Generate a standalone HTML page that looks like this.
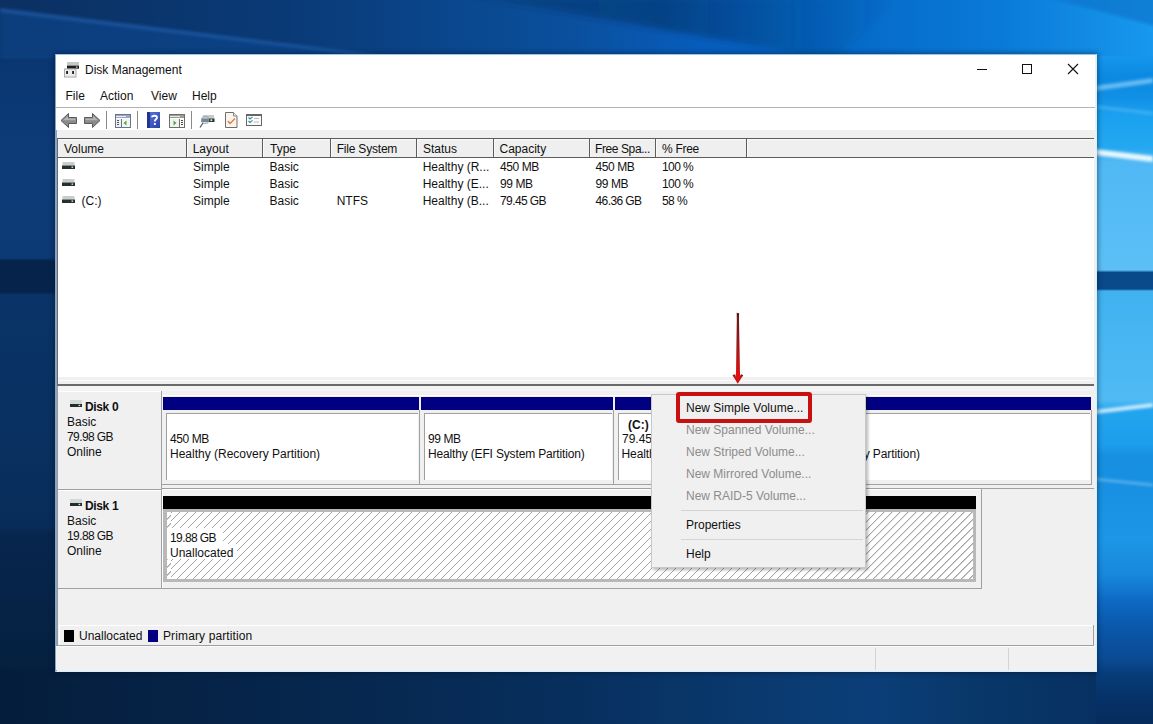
<!DOCTYPE html>
<html><head><meta charset="utf-8">
<style>
*{margin:0;padding:0;box-sizing:border-box}
html,body{width:1153px;height:724px;overflow:hidden;position:relative;background:#0a3a72}
body{font-family:"Liberation Sans",sans-serif;font-size:12px;color:#111}
.a{position:absolute}
.t{position:absolute;white-space:nowrap;line-height:15px;height:15px}
.bg{position:absolute}
</style></head><body>

<!-- desktop background -->
<svg class="a" style="left:0;top:0" width="1153" height="724" viewBox="0 0 1153 724">
<defs>
 <linearGradient id="gTop" x1="0" y1="0" x2="1153" y2="0" gradientUnits="userSpaceOnUse">
  <stop offset="0" stop-color="#0b3062"/><stop offset="0.25" stop-color="#0a3a76"/><stop offset="0.5" stop-color="#0a509e"/><stop offset="0.6" stop-color="#075cba"/>
  <stop offset="0.7" stop-color="#0466c4"/><stop offset="0.87" stop-color="#0a7ad8"/><stop offset="1" stop-color="#1898ee"/>
 </linearGradient>
 <linearGradient id="gLeft" x1="0" y1="56" x2="0" y2="671" gradientUnits="userSpaceOnUse"><stop offset="0.0000" stop-color="#0a3670"/><stop offset="0.1528" stop-color="#0c3b78"/><stop offset="0.3285" stop-color="#0b3a74"/><stop offset="0.3333" stop-color="#06234a"/><stop offset="0.3837" stop-color="#06244c"/><stop offset="0.3886" stop-color="#0a3468"/><stop offset="0.6407" stop-color="#09305f"/><stop offset="0.7642" stop-color="#082c5a"/><stop offset="0.7772" stop-color="#07264e"/><stop offset="1.0000" stop-color="#05203f"/></linearGradient>
 <linearGradient id="gRight" x1="0" y1="56" x2="0" y2="724" gradientUnits="userSpaceOnUse"><stop offset="0.0000" stop-color="#1696ec"/><stop offset="0.0284" stop-color="#0c8ae2"/><stop offset="0.0404" stop-color="#0c8ae2"/><stop offset="0.0659" stop-color="#1292e6"/><stop offset="0.0853" stop-color="#18a0f0"/><stop offset="0.1377" stop-color="#24a8f0"/><stop offset="0.1497" stop-color="#40b0f0"/><stop offset="0.1587" stop-color="#50b8f4"/><stop offset="0.3204" stop-color="#5cc0f6"/><stop offset="0.3241" stop-color="#0a4888"/><stop offset="0.3488" stop-color="#0a4a8c"/><stop offset="0.3518" stop-color="#40b2f0"/><stop offset="0.5150" stop-color="#50baf4"/><stop offset="0.5299" stop-color="#22a4ee"/><stop offset="0.5823" stop-color="#1c9eec"/><stop offset="0.5973" stop-color="#1890e2"/><stop offset="0.6347" stop-color="#1890e2"/><stop offset="0.7246" stop-color="#1c96e6"/><stop offset="0.7769" stop-color="#1888dc"/><stop offset="0.8144" stop-color="#0e6ac4"/><stop offset="0.8593" stop-color="#0a56a8"/><stop offset="0.9042" stop-color="#0a4a92"/><stop offset="0.9266" stop-color="#073c78"/><stop offset="0.9566" stop-color="#06326a"/><stop offset="1.0000" stop-color="#052c5c"/></linearGradient>
 <linearGradient id="gBot" x1="0" y1="0" x2="1153" y2="0" gradientUnits="userSpaceOnUse"><stop offset="0" stop-color="#051d3c"/><stop offset="0.26" stop-color="#06264c"/><stop offset="0.48" stop-color="#072e5c"/><stop offset="0.67" stop-color="#0a3a70"/><stop offset="0.76" stop-color="#0b3e78"/><stop offset="0.86" stop-color="#083668"/><stop offset="1" stop-color="#062e5e"/></linearGradient>
 <linearGradient id="gBotR" x1="0" y1="660" x2="0" y2="724" gradientUnits="userSpaceOnUse">
  <stop offset="0" stop-color="#0a4c98"/><stop offset="1" stop-color="#083a72"/>
 </linearGradient>
 <linearGradient id="gWedge" x1="470" y1="0" x2="900" y2="0" gradientUnits="userSpaceOnUse"><stop offset="0" stop-color="#022a58" stop-opacity="0.25"/><stop offset="0.45" stop-color="#022a58" stop-opacity="0.5"/><stop offset="1" stop-color="#023060" stop-opacity="0"/></linearGradient>
 <filter id="bl" x="-10%" y="-50%" width="120%" height="200%"><feGaussianBlur stdDeviation="1.5"/></filter>
 <filter id="bl3" x="-10%" y="-50%" width="120%" height="200%"><feGaussianBlur stdDeviation="3"/></filter>
</defs>
<rect x="0" y="0" width="1153" height="724" fill="#0a3a72"/>
<rect x="0" y="0" width="1153" height="58" fill="url(#gTop)"/>
<rect x="0" y="56" width="58" height="615" fill="url(#gLeft)"/>
<rect x="1094" y="56" width="59" height="668" fill="url(#gRight)"/>
<rect x="0" y="668" width="1096" height="56" fill="url(#gBot)"/>

<!-- top band shapes -->
<polygon points="0,10 390,58 0,58" fill="#0e4a92" opacity="0.55" filter="url(#bl)"/>
<polygon points="0,8 390,56 390,59 0,12" fill="#2a6cc0" opacity="0.5" filter="url(#bl)"/>
<polygon points="470,-4 900,-4 836,60" fill="url(#gWedge)" filter="url(#bl3)"/>
<polygon points="1050,-2 1160,-2 1160,27" fill="#0a74cc" opacity="0.7" filter="url(#bl)"/>
<!-- right strip streaks -->
<polygon points="1094,86 1153,78 1153,83 1094,91" fill="#80c8f6" opacity="0.8" filter="url(#bl)"/>
<polygon points="1094,105 1153,112 1153,115 1094,108" fill="#60b8f2" opacity="0.6" filter="url(#bl)"/>
<polygon points="1094,149 1153,156 1153,162 1094,155" fill="#e8f8ff" opacity="1" filter="url(#bl)"/>
<polygon points="1094,410 1153,403 1153,407 1094,414" fill="#e0f4ff" opacity="0.9" filter="url(#bl)"/>
<polygon points="1094,478 1153,484 1153,486 1094,480" fill="#90d0f4" opacity="0.7" filter="url(#bl)"/>
</svg>

<!-- window -->
<div class="a" id="win" style="left:55px;top:54px;width:1042px;height:618px;background:#f0f0f0;border:1px solid #d8f0fa;border-top-color:#9cc4e4;border-left:2px solid #8aa4c4;box-shadow:0 0 5px 1px rgba(0,16,40,0.45)"></div>
<!-- title bar + menu + toolbar white -->
<div class="a" style="left:56px;top:55px;width:1039px;height:52px;background:#fff"></div>
<div class="a" style="left:56px;top:107px;width:1039px;height:1px;background:#b4b4b4"></div>
<div class="a" style="left:56px;top:108px;width:1039px;height:22px;background:#fff"></div>

<!-- title icon -->
<svg class="a" style="left:64px;top:62px" width="16" height="16" viewBox="0 0 16 16">
  <rect x="3" y="0" width="12" height="3" fill="#c8c8c8"/>
  <rect x="3" y="3.5" width="12" height="3.2" fill="#1e1e1e"/>
  <rect x="12" y="4.5" width="1.5" height="1.2" fill="#d8d8d8"/>
  <rect x="0.5" y="7" width="11.5" height="8" fill="#ececec" stroke="#a8a8a8" stroke-width="1"/>
  <rect x="2.2" y="9" width="1.7" height="3" fill="#111"/>
  <rect x="8.2" y="9" width="1.7" height="3" fill="#111"/>
</svg>
<div class="t" style="left:85px;top:63px">Disk Management</div>

<!-- window controls -->
<div class="a" style="left:977px;top:69px;width:10px;height:1px;background:#111"></div>
<div class="a" style="left:1022px;top:64px;width:10px;height:10px;border:1px solid #111"></div>
<svg class="a" style="left:1067px;top:63px" width="12" height="12" viewBox="0 0 12 12"><path d="M1 1L11 11M11 1L1 11" stroke="#111" stroke-width="1.1"/></svg>

<!-- menu -->
<div class="t" style="left:65.5px;top:89px">File</div>
<div class="t" style="left:100px;top:89px">Action</div>
<div class="t" style="left:151px;top:89px">View</div>
<div class="t" style="left:192px;top:89px">Help</div>

<!-- toolbar -->
<div id="toolbar">
<svg class="a" style="left:60px;top:112px" width="18" height="17" viewBox="0 0 18 17">
 <path d="M1 8.5L8.5 1.5V5.5H16.5V11.5H8.5V15.5Z" fill="#8a8a8a" stroke="#5a5a5a" stroke-width="1" stroke-linejoin="round"/>
 <path d="M3 8.3L8 3.8V6.5H15.5V8.3Z" fill="#b4b4b4"/>
</svg>
<svg class="a" style="left:83px;top:112px" width="18" height="17" viewBox="0 0 18 17">
 <path d="M17 8.5L9.5 1.5V5.5H1.5V11.5H9.5V15.5Z" fill="#8a8a8a" stroke="#5a5a5a" stroke-width="1" stroke-linejoin="round"/>
 <path d="M15 8.3L10 3.8V6.5H2.5V8.3Z" fill="#b4b4b4"/>
</svg>
<div class="a" style="left:106px;top:111px;width:1px;height:18px;background:#8a8a8a"></div>
<svg class="a" style="left:115px;top:114px" width="16" height="14" viewBox="0 0 16 14">
 <rect x="0.5" y="0.5" width="15" height="13" fill="#fff" stroke="#6a7290"/>
 <rect x="1" y="1" width="14" height="3" fill="#9aa6c4"/>
 <rect x="1" y="2" width="10" height="1" fill="#e8ecf4"/>
 <rect x="1" y="5" width="5" height="8" fill="#eef0f6"/>
 <rect x="2" y="6" width="2" height="1" fill="#555"/><rect x="2" y="8" width="2" height="1" fill="#555"/><rect x="2" y="10" width="2" height="1" fill="#555"/>
 <rect x="6" y="5" width="1" height="8" fill="#6a7290"/>
 <rect x="7" y="5" width="8" height="8" fill="#f0f8ec"/>
 <path d="M8.5 9L11.5 6.5V11.5Z" fill="#5aa05a"/>
</svg>
<div class="a" style="left:137px;top:111px;width:1px;height:18px;background:#8a8a8a"></div>
<svg class="a" style="left:147px;top:112px" width="13" height="16" viewBox="0 0 13 16">
 <defs><linearGradient id="hb" x1="0" y1="0" x2="1" y2="1"><stop offset="0" stop-color="#5a78e0"/><stop offset="1" stop-color="#2a40a8"/></linearGradient></defs>
 <rect x="0" y="0" width="13" height="16" fill="url(#hb)"/>
 <rect x="0" y="0" width="3" height="16" fill="#203490"/>
 <path d="M5 5.2C5 3.2 10 3.2 10 5.6C10 7.2 7.8 7.4 7.8 9.4" fill="none" stroke="#fff" stroke-width="1.8"/>
 <rect x="6.9" y="11" width="1.9" height="1.9" fill="#fff"/>
</svg>
<svg class="a" style="left:169px;top:114px" width="16" height="14" viewBox="0 0 16 14">
 <rect x="0.5" y="0.5" width="15" height="13" fill="#fff" stroke="#6e6e6e"/>
 <rect x="1" y="1" width="14" height="3" fill="#9a9a9a"/>
 <rect x="1" y="2" width="10" height="1" fill="#eaeaea"/>
 <rect x="1" y="5" width="9" height="8" fill="#eef6ea"/>
 <path d="M4.5 6.5L7.5 9L4.5 11.5Z" fill="#5aa05a"/>
 <rect x="10" y="5" width="1" height="8" fill="#6e6e6e"/>
 <rect x="12" y="6" width="2" height="1" fill="#444"/><rect x="12" y="8" width="2" height="1" fill="#444"/><rect x="12" y="10" width="2" height="1" fill="#444"/>
</svg>
<div class="a" style="left:191px;top:111px;width:1px;height:18px;background:#8a8a8a"></div>
<svg class="a" style="left:199px;top:114px" width="16" height="15" viewBox="0 0 16 15">
 <rect x="4" y="1" width="11" height="3.5" fill="#c4ccc8"/>
 <rect x="2.5" y="4.5" width="13" height="3.5" fill="#2a3230"/>
 <rect x="11.5" y="5.3" width="1.8" height="1.8" fill="#e8f0e8"/>
 <circle cx="6.2" cy="6" r="3.8" fill="#b8c8d8" fill-opacity="0.55" stroke="#8aa0b4" stroke-width="0.7"/>
 <path d="M4 9L1 13.5" stroke="#555" stroke-width="1.2"/>
</svg>
<svg class="a" style="left:225px;top:112px" width="13" height="17" viewBox="0 0 13 17">
 <path d="M0.5 0.5H8.5L12 4V15.5H0.5Z" fill="#fdf4ee" stroke="#6e6e6e"/>
 <path d="M8.5 0.5V4H12" fill="#e8e8e8" stroke="#8a8a8a"/>
 <path d="M2.8 9L5 11.5L10 6.5" fill="none" stroke="#dc7a40" stroke-width="1.3"/>
</svg>
<svg class="a" style="left:246px;top:114px" width="16" height="12" viewBox="0 0 16 12">
 <rect x="0.5" y="0.5" width="15" height="11" fill="#fafcfc" stroke="#666"/>
 <rect x="0.5" y="0.5" width="15" height="1.5" fill="#666"/>
 <path d="M2.5 3.5L4 5L6.5 2.8M2.5 7L4 8.5L6.5 6.3" fill="none" stroke="#3a8a9a" stroke-width="1.1"/>
 <rect x="8" y="4" width="5" height="1" fill="#bbb"/><rect x="8" y="7.5" width="5" height="1" fill="#bbb"/>
</svg>
</div>

<!-- list view -->
<div class="a" style="left:57px;top:138px;width:1037px;height:248px;background:#fff;border-top:1px solid #5c5c5c;border-left:1px solid #6a6a6a"></div>
<div class="a" style="left:58px;top:139px;width:1036px;height:19px;background:#efefef;border-top:1px solid #fafafa;border-bottom:1px solid #5c5c5c"></div>
<div id="hdr">
<div class="t" style="left:64px;top:142px">Volume</div>
<div class="t" style="left:192.7px;top:142px">Layout</div>
<div class="t" style="left:270px;top:142px">Type</div>
<div class="t" style="left:336.7px;top:142px;letter-spacing:-0.2px">File System</div>
<div class="t" style="left:423px;top:142px">Status</div>
<div class="t" style="left:499.5px;top:142px">Capacity</div>
<div class="t" style="left:595px;top:142px;letter-spacing:-0.4px">Free Spa...</div>
<div class="t" style="left:662px;top:142px;letter-spacing:-0.3px">% Free</div>
<div class="a" style="left:186px;top:139px;width:1px;height:18px;background:#5c5c5c"></div><div class="a" style="left:187px;top:140px;width:1px;height:17px;background:#fafafa"></div>
<div class="a" style="left:262px;top:139px;width:1px;height:18px;background:#5c5c5c"></div><div class="a" style="left:263px;top:140px;width:1px;height:17px;background:#fafafa"></div>
<div class="a" style="left:330px;top:139px;width:1px;height:18px;background:#5c5c5c"></div><div class="a" style="left:331px;top:140px;width:1px;height:17px;background:#fafafa"></div>
<div class="a" style="left:416px;top:139px;width:1px;height:18px;background:#5c5c5c"></div><div class="a" style="left:417px;top:140px;width:1px;height:17px;background:#fafafa"></div>
<div class="a" style="left:493px;top:139px;width:1px;height:18px;background:#5c5c5c"></div><div class="a" style="left:494px;top:140px;width:1px;height:17px;background:#fafafa"></div>
<div class="a" style="left:589px;top:139px;width:1px;height:18px;background:#5c5c5c"></div><div class="a" style="left:590px;top:140px;width:1px;height:17px;background:#fafafa"></div>
<div class="a" style="left:655px;top:139px;width:1px;height:18px;background:#5c5c5c"></div><div class="a" style="left:656px;top:140px;width:1px;height:17px;background:#fafafa"></div>
<div class="a" style="left:746px;top:139px;width:1px;height:18px;background:#5c5c5c"></div><div class="a" style="left:747px;top:140px;width:1px;height:17px;background:#fafafa"></div>
</div>
<div id="rows">
<svg class="a" style="left:62px;top:162px" width="13" height="8" viewBox="0 0 13 8"><rect x="0.5" y="0" width="12" height="3.5" fill="#c8cecb"/><rect x="0" y="3.5" width="13" height="3.5" fill="#27302c"/><rect x="9.5" y="4.5" width="1.6" height="1.3" fill="#e6eee8"/></svg>
<div class="t" style="left:193px;top:160px">Simple</div>
<div class="t" style="left:269.5px;top:160px">Basic</div>
<div class="t" style="left:422.7px;top:160px">Healthy (R...</div>
<div class="t" style="left:500px;top:160px;letter-spacing:-0.4px">450 MB</div>
<div class="t" style="left:595.5px;top:160px;letter-spacing:-0.4px">450 MB</div>
<div class="t" style="left:662px;top:160px;letter-spacing:-0.6px">100 %</div>
<svg class="a" style="left:62px;top:179px" width="13" height="8" viewBox="0 0 13 8"><rect x="0.5" y="0" width="12" height="3.5" fill="#c8cecb"/><rect x="0" y="3.5" width="13" height="3.5" fill="#27302c"/><rect x="9.5" y="4.5" width="1.6" height="1.3" fill="#e6eee8"/></svg>
<div class="t" style="left:193px;top:177px">Simple</div>
<div class="t" style="left:269.5px;top:177px">Basic</div>
<div class="t" style="left:422.7px;top:177px">Healthy (E...</div>
<div class="t" style="left:500px;top:177px;letter-spacing:-0.4px">99 MB</div>
<div class="t" style="left:595.5px;top:177px;letter-spacing:-0.4px">99 MB</div>
<div class="t" style="left:662px;top:177px;letter-spacing:-0.6px">100 %</div>
<svg class="a" style="left:62px;top:196px" width="13" height="8" viewBox="0 0 13 8"><rect x="0.5" y="0" width="12" height="3.5" fill="#c8cecb"/><rect x="0" y="3.5" width="13" height="3.5" fill="#27302c"/><rect x="9.5" y="4.5" width="1.6" height="1.3" fill="#e6eee8"/></svg>
<div class="t" style="left:81.5px;top:194px">(C:)</div>
<div class="t" style="left:193px;top:194px">Simple</div>
<div class="t" style="left:269.5px;top:194px">Basic</div>
<div class="t" style="left:336.7px;top:194px">NTFS</div>
<div class="t" style="left:422.7px;top:194px">Healthy (B...</div>
<div class="t" style="left:500px;top:194px;letter-spacing:-0.6px">79.45 GB</div>
<div class="t" style="left:595.5px;top:194px;letter-spacing:-0.6px">46.36 GB</div>
<div class="t" style="left:662px;top:194px;letter-spacing:-0.6px">58 %</div>
</div>

<!-- splitter -->
<div class="a" style="left:58px;top:377px;width:1036px;height:7px;background:#f0f0f0"></div>
<div class="a" style="left:58px;top:380px;width:1036px;height:1px;background:#fafafa"></div>
<div class="a" style="left:57px;top:384px;width:1037px;height:2px;background:#6a6a6a"></div>

<!-- disk pane -->
<div class="a" style="left:57px;top:386px;width:1px;height:260px;background:#9a9a9a"></div>
<div id="disks">
<div class="a" style="left:58px;top:386px;width:1036px;height:5px;background:#f4f4f4"></div>
<div class="a" style="left:58px;top:391px;width:103px;height:1px;background:#ffffff"></div>
<div class="a" style="left:161px;top:391px;width:1px;height:197px;background:#a0a0a0"></div>
<div class="a" style="left:58px;top:489px;width:103px;height:1px;background:#a0a0a0"></div>
<div class="a" style="left:58px;top:490px;width:103px;height:1px;background:#ffffff"></div>
<div class="a" style="left:58px;top:588px;width:104px;height:1px;background:#a0a0a0"></div>
<svg class="a" style="left:69px;top:400px" width="13" height="8" viewBox="0 0 13 8"><rect x="1" y="0" width="12" height="4" fill="#cfdcd6"/><rect x="1" y="4" width="12" height="3" fill="#252c28"/><rect x="9.6" y="4.8" width="1.6" height="1.3" fill="#dfe8e2"/></svg>
<div class="t" style="left:85px;top:400px;font-weight:bold;letter-spacing:-0.35px">Disk 0</div>
<div class="t" style="left:67px;top:415px;">Basic</div>
<div class="t" style="left:67px;top:430px;letter-spacing:-0.6px">79.98 GB</div>
<div class="t" style="left:67px;top:445px;">Online</div>
<svg class="a" style="left:69px;top:499px" width="13" height="8" viewBox="0 0 13 8"><rect x="1" y="0" width="12" height="4" fill="#cfdcd6"/><rect x="1" y="4" width="12" height="3" fill="#252c28"/><rect x="9.6" y="4.8" width="1.6" height="1.3" fill="#dfe8e2"/></svg>
<div class="t" style="left:85px;top:499px;font-weight:bold;letter-spacing:-0.35px">Disk 1</div>
<div class="t" style="left:67px;top:514px;">Basic</div>
<div class="t" style="left:67px;top:529px;letter-spacing:-0.6px">19.88 GB</div>
<div class="t" style="left:67px;top:544px;">Online</div>
<div class="a" style="left:162px;top:395px;width:257px;height:1px;background:#ffffff"></div>
<div class="a" style="left:419px;top:410px;width:1px;height:75px;background:#a0a0a0"></div>
<div class="a" style="left:162px;top:484px;width:258px;height:1px;background:#a0a0a0"></div>
<div class="a" style="left:163px;top:397px;width:256px;height:13px;background:#000080"></div>
<div class="a" style="left:166px;top:413px;width:252px;height:67px;background:#fff;border-left:1px solid #a0a0a0;border-top:1px solid #a0a0a0"></div>
<div class="t" style="left:170px;top:432px;letter-spacing:-0.4px">450 MB</div>
<div class="t" style="left:170px;top:447px;">Healthy (Recovery Partition)</div>
<div class="a" style="left:420px;top:395px;width:193px;height:1px;background:#ffffff"></div>
<div class="a" style="left:613px;top:410px;width:1px;height:75px;background:#a0a0a0"></div>
<div class="a" style="left:420px;top:484px;width:194px;height:1px;background:#a0a0a0"></div>
<div class="a" style="left:421px;top:397px;width:192px;height:13px;background:#000080"></div>
<div class="a" style="left:424px;top:413px;width:188px;height:67px;background:#fff;border-left:1px solid #a0a0a0;border-top:1px solid #a0a0a0"></div>
<div class="t" style="left:428px;top:432px;letter-spacing:-0.4px">99 MB</div>
<div class="t" style="left:428px;top:447px;letter-spacing:-0.16px">Healthy (EFI System Partition)</div>
<div class="a" style="left:614px;top:395px;width:477px;height:1px;background:#ffffff"></div>
<div class="a" style="left:1091px;top:410px;width:1px;height:75px;background:#a0a0a0"></div>
<div class="a" style="left:614px;top:484px;width:478px;height:1px;background:#a0a0a0"></div>
<div class="a" style="left:615px;top:397px;width:476px;height:13px;background:#000080"></div>
<div class="a" style="left:618px;top:413px;width:472px;height:67px;background:#fff;border-left:1px solid #a0a0a0;border-top:1px solid #a0a0a0"></div>
<div class="t" style="left:628px;top:418px;font-weight:bold">(C:)</div>
<div class="t" style="left:622px;top:432px;">79.45 GB NTFS</div>
<div class="t" style="left:621.5px;top:447px;letter-spacing:-0.09px">Healthy (Boot, Page File, Crash Dump, Primary Partition)</div>
<div class="a" style="left:162px;top:488px;width:932px;height:1px;background:#a0a0a0"></div>
<div class="a" style="left:981px;top:489px;width:1px;height:99px;background:#a0a0a0"></div>
<div class="a" style="left:162px;top:489px;width:819px;height:1px;background:#ffffff"></div>
<div class="a" style="left:163px;top:496px;width:813px;height:13px;background:#000"></div>
<div class="a" style="left:162px;top:588px;width:820px;height:1px;background:#a0a0a0"></div>
<div class="a" style="left:162px;top:490px;width:1px;height:98px;background:#ffffff"></div>
<div class="a" style="left:163px;top:509px;width:813px;height:73px;border:3px solid #b8b8b8;border-left-width:4px;background:repeating-linear-gradient(-45deg,#ffffff 0px,#ffffff 4.85px,#a4a4a4 5px,#a4a4a4 5.66px);background-position:4px 0"></div>
<div class="a" style="left:167px;top:528px;width:56px;height:16px;background:#fff"></div>
<div class="a" style="left:167px;top:544px;width:70px;height:15px;background:#fff"></div>
<div class="t" style="left:170px;top:531px;letter-spacing:-0.6px">19.88 GB</div>
<div class="t" style="left:170px;top:546px">Unallocated</div>
</div>

<!-- legend -->
<div id="legend">
<div class="a" style="left:58px;top:625px;width:1035px;height:1px;background:#ffffff"></div>
<div class="a" style="left:59px;top:626px;width:1px;height:19px;background:#ffffff"></div>
<div class="a" style="left:58px;top:645px;width:1036px;height:1px;background:#a0a0a0"></div>
<div class="a" style="left:1093px;top:625px;width:1px;height:21px;background:#a0a0a0"></div>
<div class="a" style="left:64px;top:630px;width:10px;height:12px;background:#000"></div>
<div class="t" style="left:79px;top:629px;">Unallocated</div>
<div class="a" style="left:148px;top:630px;width:10px;height:12px;background:#000080"></div>
<div class="t" style="left:163px;top:629px;letter-spacing:0.12px">Primary partition</div>
</div>

<!-- status bar -->
<div id="status">
<div class="a" style="left:56px;top:646px;width:1039px;height:24px;background:#f1f1f1;border-top:1px solid #fafafa"></div>
<div class="a" style="left:875px;top:648px;width:1px;height:22px;background:#d4d4d4"></div>
<div class="a" style="left:1008px;top:648px;width:1px;height:22px;background:#d4d4d4"></div>
</div>

<!-- context menu -->
<div id="menu">
<div class="a" style="left:651px;top:394px;width:215px;height:174px;background:#f0f0f0;border:1px solid #c8c8c8;box-shadow:2px 2px 3px rgba(0,0,0,0.28)"></div>
<div class="t" style="left:686px;top:401px;color:#111">New Simple Volume...</div>
<div class="t" style="left:686px;top:423px;color:#8c8c8c">New Spanned Volume...</div>
<div class="t" style="left:686px;top:445px;color:#8c8c8c">New Striped Volume...</div>
<div class="t" style="left:686px;top:467px;color:#8c8c8c">New Mirrored Volume...</div>
<div class="t" style="left:686px;top:489px;color:#8c8c8c">New RAID-5 Volume...</div>
<div class="t" style="left:686px;top:518px;color:#111">Properties</div>
<div class="t" style="left:686px;top:547px;color:#111">Help</div>
<div class="a" style="left:681px;top:510px;width:182px;height:1px;background:#d4d4d4"></div>
<div class="a" style="left:681px;top:539px;width:182px;height:1px;background:#d4d4d4"></div>
<div class="a" style="left:676px;top:392px;width:136px;height:31px;border:4px solid #c81010;border-radius:3px"></div>
</div>

<!-- arrow -->
<div id="arrow"><svg class="a" style="left:728px;top:310px" width="20" height="76" viewBox="0 0 20 76">
<defs><linearGradient id="ag" x1="0" y1="0" x2="0" y2="76" gradientUnits="userSpaceOnUse"><stop offset="0" stop-color="#4a1212"/><stop offset="0.1" stop-color="#6a1a1a"/><stop offset="0.45" stop-color="#9a1818"/><stop offset="0.8" stop-color="#d41212"/><stop offset="1" stop-color="#e81010"/></linearGradient></defs>
<path d="M8.7 2.8L11.1 3.2L11 10L12 64L8 64L8.8 10Z" fill="url(#ag)"/>
<path d="M4.6 65.2L6.4 64.4L9.8 69.6L13.2 64.4L15.2 65.2L9.7 73.8Z" fill="#c81414"/>
<path d="M4.6 65.2L6.4 64.4L7.2 65.6L5.6 66.6Z M15.2 65.2L13.2 64.4L12.4 65.6L14 66.6Z" fill="#7a1a1a"/>
<path d="M8 63.5L12 63.5L12.4 66L9.8 72.5L7.4 66Z" fill="#e01010"/>
</svg></div>

</body></html>
